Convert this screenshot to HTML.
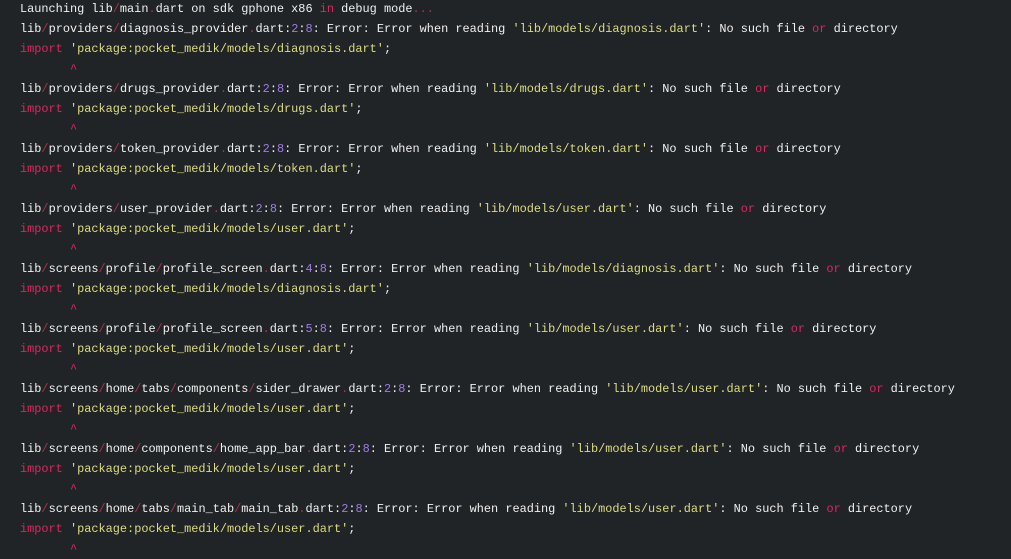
<!DOCTYPE html>
<html><head><meta charset="utf-8"><style>
body{margin:0;background:#212427;width:1011px;height:548px;overflow:hidden}
pre{margin:0;padding:0 0 0 20px;position:relative;top:-1px;font-family:"Liberation Mono",monospace;font-size:11.9px;line-height:20px;color:#f0f0f0;white-space:pre}
.s{color:#b0304a}.k{color:#e0245e}.y{color:#dcdc80}.n{color:#a07ae8}
</style></head><body><pre>Launching lib<span class="s">/</span>main<span class="s">.</span>dart on sdk gphone x86 <span class="k">in</span> debug mode<span class="s">...</span>
lib<span class="s">/</span>providers<span class="s">/</span>diagnosis_provider<span class="s">.</span>dart:<span class="n">2</span>:<span class="n">8</span>: Error: Error when reading <span class="y">'lib/models/diagnosis.dart'</span>: No such file <span class="k">or</span> directory
<span class="k">import</span> <span class="y">'package:pocket_medik/models/diagnosis.dart'</span>;
       <span class="k">^</span>
lib<span class="s">/</span>providers<span class="s">/</span>drugs_provider<span class="s">.</span>dart:<span class="n">2</span>:<span class="n">8</span>: Error: Error when reading <span class="y">'lib/models/drugs.dart'</span>: No such file <span class="k">or</span> directory
<span class="k">import</span> <span class="y">'package:pocket_medik/models/drugs.dart'</span>;
       <span class="k">^</span>
lib<span class="s">/</span>providers<span class="s">/</span>token_provider<span class="s">.</span>dart:<span class="n">2</span>:<span class="n">8</span>: Error: Error when reading <span class="y">'lib/models/token.dart'</span>: No such file <span class="k">or</span> directory
<span class="k">import</span> <span class="y">'package:pocket_medik/models/token.dart'</span>;
       <span class="k">^</span>
lib<span class="s">/</span>providers<span class="s">/</span>user_provider<span class="s">.</span>dart:<span class="n">2</span>:<span class="n">8</span>: Error: Error when reading <span class="y">'lib/models/user.dart'</span>: No such file <span class="k">or</span> directory
<span class="k">import</span> <span class="y">'package:pocket_medik/models/user.dart'</span>;
       <span class="k">^</span>
lib<span class="s">/</span>screens<span class="s">/</span>profile<span class="s">/</span>profile_screen<span class="s">.</span>dart:<span class="n">4</span>:<span class="n">8</span>: Error: Error when reading <span class="y">'lib/models/diagnosis.dart'</span>: No such file <span class="k">or</span> directory
<span class="k">import</span> <span class="y">'package:pocket_medik/models/diagnosis.dart'</span>;
       <span class="k">^</span>
lib<span class="s">/</span>screens<span class="s">/</span>profile<span class="s">/</span>profile_screen<span class="s">.</span>dart:<span class="n">5</span>:<span class="n">8</span>: Error: Error when reading <span class="y">'lib/models/user.dart'</span>: No such file <span class="k">or</span> directory
<span class="k">import</span> <span class="y">'package:pocket_medik/models/user.dart'</span>;
       <span class="k">^</span>
lib<span class="s">/</span>screens<span class="s">/</span>home<span class="s">/</span>tabs<span class="s">/</span>components<span class="s">/</span>sider_drawer<span class="s">.</span>dart:<span class="n">2</span>:<span class="n">8</span>: Error: Error when reading <span class="y">'lib/models/user.dart'</span>: No such file <span class="k">or</span> directory
<span class="k">import</span> <span class="y">'package:pocket_medik/models/user.dart'</span>;
       <span class="k">^</span>
lib<span class="s">/</span>screens<span class="s">/</span>home<span class="s">/</span>components<span class="s">/</span>home_app_bar<span class="s">.</span>dart:<span class="n">2</span>:<span class="n">8</span>: Error: Error when reading <span class="y">'lib/models/user.dart'</span>: No such file <span class="k">or</span> directory
<span class="k">import</span> <span class="y">'package:pocket_medik/models/user.dart'</span>;
       <span class="k">^</span>
lib<span class="s">/</span>screens<span class="s">/</span>home<span class="s">/</span>tabs<span class="s">/</span>main_tab<span class="s">/</span>main_tab<span class="s">.</span>dart:<span class="n">2</span>:<span class="n">8</span>: Error: Error when reading <span class="y">'lib/models/user.dart'</span>: No such file <span class="k">or</span> directory
<span class="k">import</span> <span class="y">'package:pocket_medik/models/user.dart'</span>;
       <span class="k">^</span>
</pre></body></html>
